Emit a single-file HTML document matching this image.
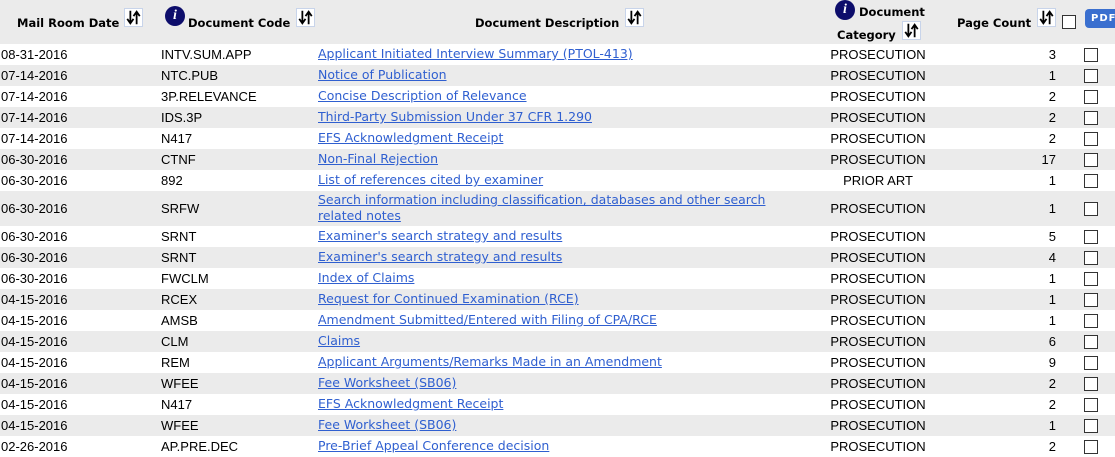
<!DOCTYPE html>
<html><head><style>
body{margin:0;width:1115px;height:456px;overflow:hidden;background:#fff;font-family:"Liberation Sans",Arial,sans-serif;font-size:13px;color:#000}
.hdr{position:absolute;left:0;top:0;width:1115px;height:44px;background:#ebebeb}
.h{position:absolute;font-family:"DejaVu Sans",Verdana,sans-serif;font-weight:bold;font-size:11.5px;white-space:nowrap}
.sort{position:absolute;width:19px;height:19px;background:#fff;border:1px solid #c8d4ea;box-sizing:border-box}
.info{position:absolute;width:20px;height:20px;border-radius:50%;background:#0d0d6b;color:#fff;font:italic bold 14px "Liberation Serif",serif;text-align:center;line-height:20px}
.cb{position:absolute;width:14px;height:14px;border:1px solid #333;background:#fff;box-sizing:border-box}
.row{position:absolute;left:0;width:1115px;height:21px}
.row span{position:absolute;top:3px;white-space:nowrap}
.g{background:#ebebeb}
a{color:#2f5fd0;text-decoration:underline;font-family:"DejaVu Sans",Verdana,sans-serif;font-size:12.5px;line-height:16px}
.pdf{position:absolute;left:1085px;top:9px;width:40px;height:19px;background:#3a6fcf;border-radius:4px;color:#fff;font:bold 10px "DejaVu Sans",sans-serif;line-height:19px;padding-left:6px;letter-spacing:1px;box-sizing:border-box}
</style></head><body>
<div class="hdr">
<div class="h" style="left:17px;top:16px">Mail Room Date</div>
<svg class="sort" style="left:124px;top:8px" viewBox="0 0 19 19"><path d="M6 2v13M2.5 11l3.5 5 3.5-5M13 17V4M9.5 8l3.5-5 3.5 5" stroke="#000" stroke-width="2" fill="none"/></svg>
<div class="info" style="left:165px;top:6px">i</div>
<div class="h" style="left:188px;top:16px">Document Code</div>
<svg class="sort" style="left:296px;top:8px" viewBox="0 0 19 19"><path d="M6 2v13M2.5 11l3.5 5 3.5-5M13 17V4M9.5 8l3.5-5 3.5 5" stroke="#000" stroke-width="2" fill="none"/></svg>
<div class="h" style="left:475px;top:16px">Document Description</div>
<svg class="sort" style="left:625px;top:8px" viewBox="0 0 19 19"><path d="M6 2v13M2.5 11l3.5 5 3.5-5M13 17V4M9.5 8l3.5-5 3.5 5" stroke="#000" stroke-width="2" fill="none"/></svg>
<div class="info" style="left:835px;top:0px">i</div>
<div class="h" style="left:859px;top:5px">Document</div>
<div class="h" style="left:837px;top:28px">Category</div>
<svg class="sort" style="left:902px;top:21px" viewBox="0 0 19 19"><path d="M6 2v13M2.5 11l3.5 5 3.5-5M13 17V4M9.5 8l3.5-5 3.5 5" stroke="#000" stroke-width="2" fill="none"/></svg>
<div class="h" style="left:957px;top:16px">Page Count</div>
<svg class="sort" style="left:1037px;top:8px" viewBox="0 0 19 19"><path d="M6 2v13M2.5 11l3.5 5 3.5-5M13 17V4M9.5 8l3.5-5 3.5 5" stroke="#000" stroke-width="2" fill="none"/></svg>
<div class="cb" style="left:1062px;top:15px"></div>
<div class="pdf">PDF</div>
</div>
<div id="rows"></div>
<script>
var d=[["08-31-2016","INTV.SUM.APP","Applicant Initiated Interview Summary (PTOL-413)","PROSECUTION",3],
["07-14-2016","NTC.PUB","Notice of Publication","PROSECUTION",1],
["07-14-2016","3P.RELEVANCE","Concise Description of Relevance","PROSECUTION",2],
["07-14-2016","IDS.3P","Third-Party Submission Under 37 CFR 1.290","PROSECUTION",2],
["07-14-2016","N417","EFS Acknowledgment Receipt","PROSECUTION",2],
["06-30-2016","CTNF","Non-Final Rejection","PROSECUTION",17],
["06-30-2016","892","List of references cited by examiner","PRIOR ART",1],
["06-30-2016","SRFW","Search information including classification, databases and other search<br>related notes","PROSECUTION",1],
["06-30-2016","SRNT","Examiner's search strategy and results","PROSECUTION",5],
["06-30-2016","SRNT","Examiner's search strategy and results","PROSECUTION",4],
["06-30-2016","FWCLM","Index of Claims","PROSECUTION",1],
["04-15-2016","RCEX","Request for Continued Examination (RCE)","PROSECUTION",1],
["04-15-2016","AMSB","Amendment Submitted/Entered with Filing of CPA/RCE","PROSECUTION",1],
["04-15-2016","CLM","Claims","PROSECUTION",6],
["04-15-2016","REM","Applicant Arguments/Remarks Made in an Amendment","PROSECUTION",9],
["04-15-2016","WFEE","Fee Worksheet (SB06)","PROSECUTION",2],
["04-15-2016","N417","EFS Acknowledgment Receipt","PROSECUTION",2],
["04-15-2016","WFEE","Fee Worksheet (SB06)","PROSECUTION",1],
["02-26-2016","AP.PRE.DEC","Pre-Brief Appeal Conference decision","PROSECUTION",2]];
var h="",y=44;
d.forEach(function(r,i){var ht=i==7?35:21,t=i==7?10:3;
h+='<div class="row'+(i%2?' g':'')+'" style="top:'+y+'px;height:'+ht+'px">'+
'<span style="left:1px;top:'+t+'px">'+r[0]+'</span><span style="left:161px;top:'+t+'px">'+r[1]+'</span>'+
'<span style="left:318px;top:'+(i==7?1:2)+'px"><a>'+r[2]+'</a></span>'+
'<span style="left:778px;width:200px;text-align:center;top:'+t+'px">'+r[3]+'</span>'+
'<span style="left:956px;width:100px;text-align:right;top:'+t+'px">'+r[4]+'</span>'+
'<div class="cb" style="left:1084px;top:'+(ht/2-7)+'px"></div></div>';
y+=ht;});
document.getElementById("rows").innerHTML=h;
</script>
</body></html>
